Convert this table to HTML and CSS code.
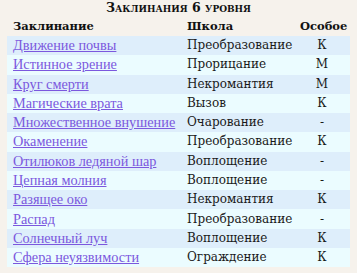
FILE: index.html
```html
<!DOCTYPE html>
<html lang="ru">
<head>
<meta charset="utf-8">
<link rel="stylesheet" href="styles.css">
</head>
<body>
<div class="page">
  <h3 class="title">Заклинания 6 уровня</h3>
  <table class="spells">
    <colgroup><col class="col-name"><col class="col-school"><col class="col-special"></colgroup>
    <thead>
      <tr><th>Заклинание</th><th>Школа</th><th class="c-special">Особое</th></tr>
    </thead>
    <tbody>
      <tr><td class="c-name"><a href="#">Движение почвы</a></td><td>Преобразование</td><td class="c-special">К</td></tr>
      <tr><td class="c-name"><a href="#">Истинное зрение</a></td><td>Прорицание</td><td class="c-special">М</td></tr>
      <tr><td class="c-name"><a href="#">Круг смерти</a></td><td>Некромантия</td><td class="c-special">М</td></tr>
      <tr><td class="c-name"><a href="#">Магические врата</a></td><td>Вызов</td><td class="c-special">К</td></tr>
      <tr><td class="c-name"><a href="#">Множественное внушение</a></td><td>Очарование</td><td class="c-special">-</td></tr>
      <tr><td class="c-name"><a href="#">Окаменение</a></td><td>Преобразование</td><td class="c-special">К</td></tr>
      <tr><td class="c-name"><a href="#">Отилюков ледяной шар</a></td><td>Воплощение</td><td class="c-special">-</td></tr>
      <tr><td class="c-name"><a href="#">Цепная молния</a></td><td>Воплощение</td><td class="c-special">-</td></tr>
      <tr><td class="c-name"><a href="#">Разящее око</a></td><td>Некромантия</td><td class="c-special">К</td></tr>
      <tr><td class="c-name"><a href="#">Распад</a></td><td>Преобразование</td><td class="c-special">-</td></tr>
      <tr><td class="c-name"><a href="#">Солнечный луч</a></td><td>Воплощение</td><td class="c-special">К</td></tr>
      <tr><td class="c-name"><a href="#">Сфера неуязвимости</a></td><td>Ограждение</td><td class="c-special">К</td></tr>
    </tbody>
  </table>
  <h3 class="title">Заклинания 7 уровня</h3>
</div>
</body>
</html>
```
FILE: styles.css
```css
html, body {
  margin: 0;
  padding: 0;
  background: #f6f2ec;
}
body {
  font-family: "DejaVu Serif", serif;
  font-size: 12px;
  color: #1a1a1a;
  overflow: hidden;
  height: 273px;
}
.page {
  padding: 0 7px;
}
.title {
  margin: 0;
  text-align: center;
  font-family: "DejaVu Serif", serif;
  font-weight: bold;
  font-size: 12.5px;
  font-variant: small-caps;
  line-height: 16px;
  color: #111;
}
.spells {
  width: 100%;
  table-layout: fixed;
  border-collapse: collapse;
  margin-top: 1px;
  margin-bottom: 6px;
  white-space: nowrap;
}
.col-name { width: 174px; }
.col-special { width: 56px; }
.spells th {
  font-family: "DejaVu Serif", serif;
  font-size: 11.5px;
  font-weight: bold;
  text-align: left;
  padding: 2px 6px 3px;
  line-height: 14px;
  color: #111;
}
.spells td {
  box-sizing: border-box;
  height: 19.27px;
  padding: 0 6px;
  line-height: 19px;
  overflow: hidden;
}
.spells td.c-name {
  font-family: "Liberation Serif", "Times New Roman", serif;
  font-size: 14.3px;
}
.spells tbody tr:nth-child(odd) { background: #deeefb; }
.spells tbody tr:nth-child(even) { background: #ebfcff; }
.spells a {
  color: #7b58de;
  text-decoration: underline;
}
.spells .c-special { text-align: center; }
```
